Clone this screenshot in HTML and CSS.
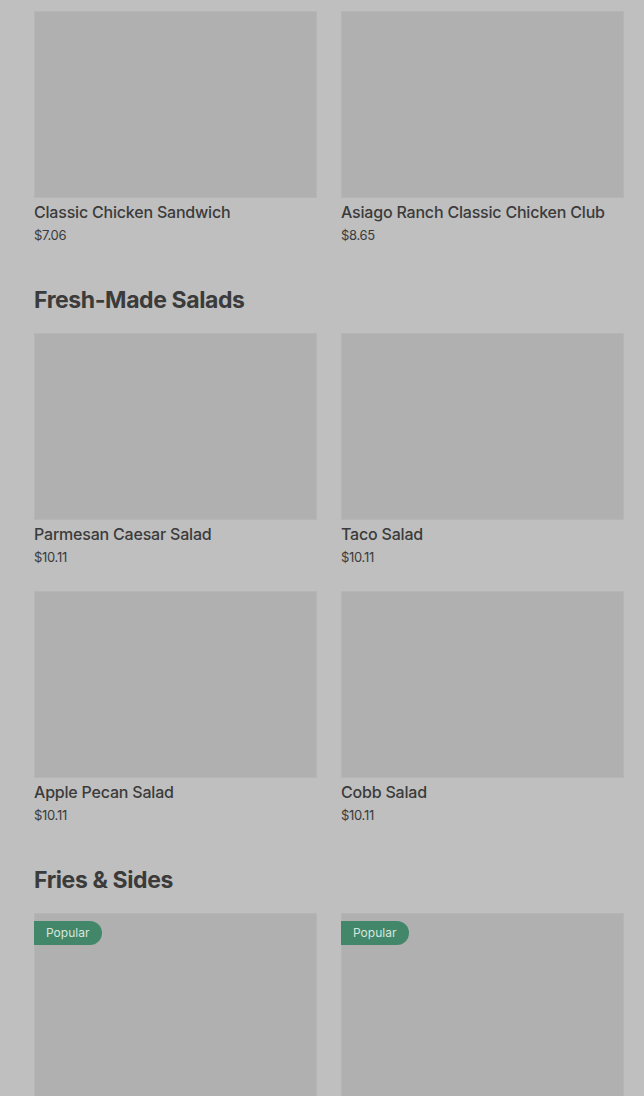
FILE: index.html
```html
<!DOCTYPE html>
<html lang="en">
<head>
    <meta charset="UTF-8">
    <meta name="viewport" content="width=device-width, initial-scale=1.0">
    <title>Menu</title>
    <link rel="stylesheet" href="styles.css">
</head>
<body>
    <main class="menu">
        <!-- Sandwiches -->
        <section class="category">
            <div class="grid">
                <div class="item">
                    <div class="thumb"></div>
                    <div class="name">Classic Chicken Sandwich</div>
                    <div class="price">$7.06</div>
                </div>
                <div class="item">
                    <div class="thumb"></div>
                    <div class="name">Asiago Ranch Classic Chicken Club</div>
                    <div class="price">$8.65</div>
                </div>
            </div>
        </section>

        <!-- Salads -->
        <section class="category">
            <h2>Fresh-Made Salads</h2>
            <div class="grid">
                <div class="item">
                    <div class="thumb"></div>
                    <div class="name">Parmesan Caesar Salad</div>
                    <div class="price">$10.11</div>
                </div>
                <div class="item">
                    <div class="thumb"></div>
                    <div class="name">Taco Salad</div>
                    <div class="price">$10.11</div>
                </div>
                <div class="item">
                    <div class="thumb"></div>
                    <div class="name">Apple Pecan Salad</div>
                    <div class="price">$10.11</div>
                </div>
                <div class="item">
                    <div class="thumb"></div>
                    <div class="name">Cobb Salad</div>
                    <div class="price">$10.11</div>
                </div>
            </div>
        </section>

        <!-- Fries -->
        <section class="category">
            <h2>Fries &amp; Sides</h2>
            <div class="grid">
                <div class="item">
                    <div class="thumb"><span class="badge">Popular</span></div>
                </div>
                <div class="item">
                    <div class="thumb"><span class="badge">Popular</span></div>
                </div>
            </div>
        </section>
    </main>
</body>
</html>
```

FILE: styles.css
```css
body {
    margin: 0;
    padding: 0;
    background-color: #bfbfbf;
    font-family: Inter, "Liberation Sans", sans-serif;
    color: #3b3b3b;
    height: 1096px;
    overflow: hidden;
}

.menu {
    padding: 11px 20px 0 34px;
}

.category {
    margin-bottom: 44px;
}

.category h2 {
    margin: 0 0 20px;
    font-size: 23px;
    font-weight: 700;
    letter-spacing: -0.4px;
    line-height: 26px;
}

.grid {
    display: grid;
    grid-template-columns: 283px 283px;
    column-gap: 24px;
    row-gap: 26px;
}

.thumb {
    position: relative;
    height: 187px;
    background-color: #b0b0b0;
    box-shadow: inset 0 0 0 1px #b5b5b5;
}

.name {
    margin-top: 4px;
    font-size: 16px;
    font-weight: 500;
    line-height: 20px;
    letter-spacing: -0.2px;
}

.price {
    margin-top: 5px;
    font-size: 13px;
    line-height: 16px;
    letter-spacing: -0.3px;
}

.badge {
    position: absolute;
    top: 8px;
    left: 0;
    height: 24px;
    padding: 0 13px 0 12px;
    background-color: #43876a;
    color: #d6e6dd;
    font-size: 12px;
    line-height: 24px;
    border-radius: 0 12px 12px 0;
}
```
